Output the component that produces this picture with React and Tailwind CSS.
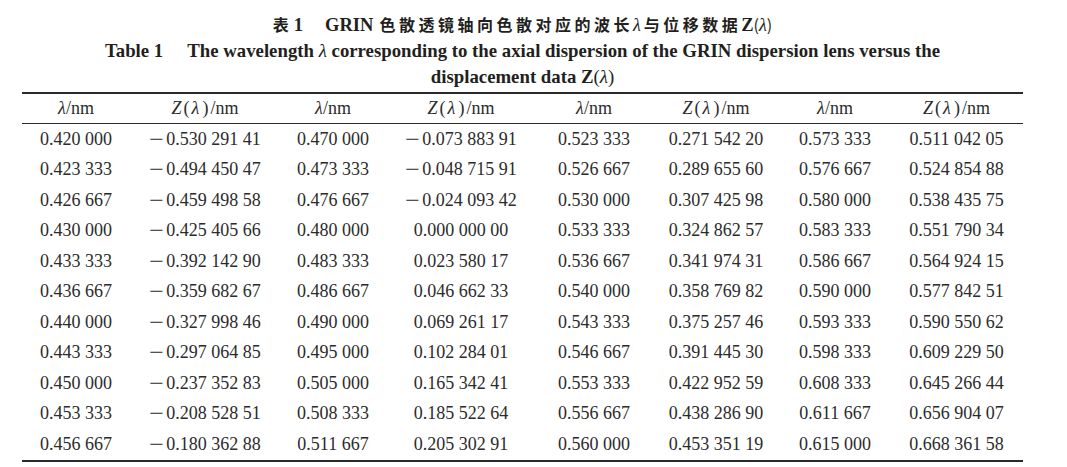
import React from "react";

const rows = [
  ["0.420 000", "−0.530 291 41", "0.470 000", "−0.073 883 91", "0.523 333", "0.271 542 20", "0.573 333", "0.511 042 05"],
  ["0.423 333", "−0.494 450 47", "0.473 333", "−0.048 715 91", "0.526 667", "0.289 655 60", "0.576 667", "0.524 854 88"],
  ["0.426 667", "−0.459 498 58", "0.476 667", "−0.024 093 42", "0.530 000", "0.307 425 98", "0.580 000", "0.538 435 75"],
  ["0.430 000", "−0.425 405 66", "0.480 000", "0.000 000 00", "0.533 333", "0.324 862 57", "0.583 333", "0.551 790 34"],
  ["0.433 333", "−0.392 142 90", "0.483 333", "0.023 580 17", "0.536 667", "0.341 974 31", "0.586 667", "0.564 924 15"],
  ["0.436 667", "−0.359 682 67", "0.486 667", "0.046 662 33", "0.540 000", "0.358 769 82", "0.590 000", "0.577 842 51"],
  ["0.440 000", "−0.327 998 46", "0.490 000", "0.069 261 17", "0.543 333", "0.375 257 46", "0.593 333", "0.590 550 62"],
  ["0.443 333", "−0.297 064 85", "0.495 000", "0.102 284 01", "0.546 667", "0.391 445 30", "0.598 333", "0.609 229 50"],
  ["0.450 000", "−0.237 352 83", "0.505 000", "0.165 342 41", "0.553 333", "0.422 952 59", "0.608 333", "0.645 266 44"],
  ["0.453 333", "−0.208 528 51", "0.508 333", "0.185 522 64", "0.556 667", "0.438 286 90", "0.611 667", "0.656 904 07"],
  ["0.456 667", "−0.180 362 88", "0.511 667", "0.205 302 91", "0.560 000", "0.453 351 19", "0.615 000", "0.668 361 58"],
];

const serif = { fontFamily: '"Liberation Serif", "Times New Roman", serif' };

function Num({ v }) {
  const neg = v.startsWith("−");
  const body = neg ? v.slice(1) : v;
  return (
    <span className="whitespace-pre" style={serif}>
      {neg && (
        <span className="inline-block w-[17px] text-left">
          <span className="inline-block scale-x-[1.45] origin-left">−</span>
        </span>
      )}
      {body}
    </span>
  );
}

function HeadL() {
  return (
    <span style={serif}>
      <i>λ</i>/nm
    </span>
  );
}
function HeadZ() {
  return (
    <span style={serif}>
      <i>Z</i>
      <span className="px-[2px]">(</span>
      <i>λ</i>
      <span className="pl-[3px] pr-[2px]">)</span>/nm
    </span>
  );
}

export default function App() {
  return (
    <div className="w-[1067px] h-[467px] bg-white text-[#2b2b2b] overflow-hidden">
      <div className="w-[1001px] ml-[22px] pt-[11px]">
        <div className="text-center leading-[26px] text-[#231f20]">
          <div
            className="text-[16px] font-bold tracking-[3.5px]"
            style={{ fontFamily: '"Noto Sans CJK SC", sans-serif' }}
          >
            <span className="tracking-[5px]">表</span>
            <span className="text-[18.5px] tracking-normal" style={serif}>1</span>
            <span className="inline-block w-[22px]"></span>
            <span className="text-[18.5px] tracking-normal mr-[6px]" style={serif}>GRIN</span>
            <span className="font-semibold">色散透镜轴向色散对应的波长</span>
            <span className="text-[18px] font-normal tracking-normal italic mr-[3px]" style={serif}>λ</span>
            <span className="font-semibold">与位移数据</span>
            <span className="text-[18.5px] tracking-normal" style={serif}>Z</span>
            <span className="font-normal tracking-normal">(</span>
            <span className="text-[18px] font-normal tracking-normal italic" style={serif}>λ</span>
            <span className="font-normal tracking-normal">)</span>
          </div>
          <div className="text-[18.8px] font-bold" style={serif}>
            Table 1<span className="inline-block w-[24px]"></span>The wavelength{" "}
            <i className="font-normal">λ</i> corresponding to the axial dispersion of the GRIN dispersion lens versus the
          </div>
          <div className="text-[18.8px] font-bold" style={serif}>
            displacement data Z<span className="font-normal">(</span>
            <i className="font-normal">λ</i>
            <span className="font-normal">)</span>
          </div>
        </div>

        <div className="mt-[2px] border-t-2 border-b-2 border-[#2a2a2a] text-[18px]">
          <div className="grid grid-cols-[108px_150px_106px_150px_116px_128px_110px_133px] h-[30px] items-center text-center border-b border-[#2a2a2a]">
            <HeadL />
            <HeadZ />
            <HeadL />
            <HeadZ />
            <HeadL />
            <HeadZ />
            <HeadL />
            <HeadZ />
          </div>
          {rows.map((r, i) => (
            <div
              key={i}
              className="grid grid-cols-[108px_150px_106px_150px_116px_128px_110px_133px] h-[30.5px] items-center text-center"
            >
              {r.map((v, j) => (
                <Num key={j} v={v} />
              ))}
            </div>
          ))}
        </div>
      </div>
    </div>
  );
}
